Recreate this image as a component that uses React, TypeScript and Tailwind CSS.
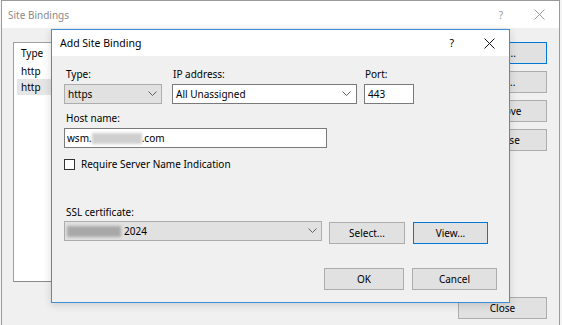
import React from 'react';

const Chevron = () => (
  <svg width="9" height="6" viewBox="0 0 9 6" className="shrink-0">
    <polyline points="0.5,0.5 4.5,4.5 8.5,0.5" fill="none" stroke="#606060" strokeWidth="1" />
  </svg>
);

const CloseX = ({ color }: { color: string }) => (
  <svg width="11" height="11" viewBox="0 0 11 11">
    <path d="M0.5 0.5 L10.5 10.5 M10.5 0.5 L0.5 10.5" stroke={color} strokeWidth="1" />
  </svg>
);

const Button = ({ label, focused = false, className = '' }: { label: string; focused?: boolean; className?: string }) => (
  <div
    className={`h-[22px] flex items-center justify-center bg-[#e1e1e1] border ${
      focused ? 'border-[#0078d7]' : 'border-[#adadad]'
    } ${className}`}
  >
    {label}
  </div>
);

const App = () => {
  return (
    <div className="w-[562px] h-[325px] bg-[#f4f4f4] relative overflow-hidden text-[10px] leading-[16px] text-black font-['Segoe_UI','Noto_Sans',sans-serif]">
      {/* Site Bindings (background window) */}
      <div className="ml-px w-[559px] h-[345px] border border-[#9a9a9a] bg-[#f0f0f0] flex flex-col">
        <div className="h-[27px] bg-white flex items-center pl-[6px] pr-[14px] text-[#8a8a8a]">
          <span className="flex-1">Site Bindings</span>
          <span className="mr-[31px] text-[#9a9a9a]">?</span>
          <CloseX color="#9a9a9a" />
        </div>
        <div className="flex pl-[11px] pt-[14px] pr-[11px]">
          <div className="w-[434px] h-[240px] bg-white border border-[#a0a0a0] border-b-[#8a8a8a] pl-[7px] pt-[1px]">
            <div className="h-[17px] flex items-center">Type</div>
            <div className="mt-[2px] h-[16px] flex items-center">http</div>
            <div className="-ml-[4px] pl-[4px] w-[34px] h-[16px] flex items-center bg-[#e5e5e5]">http</div>
          </div>
          <div className="ml-[11px] flex flex-col gap-[7px] w-[89px]">
            <Button label="Add..." focused />
            <Button label="Edit..." />
            <Button label="Remove" />
            <Button label="Browse" />
            <Button label="Close" className="mt-[139px]" />
          </div>
        </div>
      </div>

      {/* Add Site Binding dialog */}
      <div className="absolute left-[51px] top-[29px] w-[459px] h-[274px] border border-[#3c8fd8] bg-[#f0f0f0] shadow-[0_2px_8px_rgba(0,0,0,0.15)] flex flex-col">
        <div className="h-[26px] bg-white flex items-center pl-[8px] pr-[14px] text-[10.5px]">
          <span className="flex-1">Add Site Binding</span>
          <span className="mr-[30px]">?</span>
          <CloseX color="#111" />
        </div>
        <div className="flex-1 flex flex-col pl-[12px] pr-[12px] pt-[10px]">
          {/* Type / IP / Port */}
          <div className="flex">
            <div className="flex flex-col w-[98px]">
              <span className="pl-[2px]">Type:</span>
              <div className="mt-[2px] h-[20px] bg-[#e1e1e1] border border-[#adadad] flex items-center pl-[3px] pr-[4px]">
                <span className="flex-1">https</span>
                <Chevron />
              </div>
            </div>
            <div className="flex flex-col w-[185px] ml-[10px]">
              <span className="pl-[1px]">IP address:</span>
              <div className="mt-[2px] h-[20px] bg-white border border-[#7a7a7a] flex items-center pl-[3px] pr-[5px]">
                <span className="flex-1">All Unassigned</span>
                <Chevron />
              </div>
            </div>
            <div className="flex flex-col w-[50px] ml-[7px]">
              <span className="pl-[1px]">Port:</span>
              <div className="mt-[2px] h-[20px] bg-white border border-[#7a7a7a] flex items-center pl-[3px]">443</div>
            </div>
          </div>

          {/* Host name */}
          <span className="mt-[6px] pl-[2px]">Host name:</span>
          <div className="mt-[2px] w-[263px] h-[20px] bg-white border border-[#7a7a7a] flex items-center pl-[2px]">
            <span>wsm.</span>
            <span className="w-[50px] h-[11px] bg-[#cfcfcf] blur-[1.5px]" />
            <span>.com</span>
          </div>

          <div className="mt-[9px] flex items-center h-[14px]">
            <div className="w-[11px] h-[11px] bg-white border border-[#333]" />
            <span className="ml-[6px]">Require Server Name Indication</span>
          </div>

          {/* SSL certificate */}
          <span className="mt-[33px] pl-[2px]">SSL certificate:</span>
          <div className="mt-[1px] flex items-start">
            <div className="w-[258px] h-[20px] bg-[#e1e1e1] border border-[#adadad] flex items-center pl-[2px] pr-[4px]">
              <span className="w-[54px] h-[11px] bg-[#a8a8a8] blur-[1.5px]" />
              <span className="ml-[3px] flex-1">2024</span>
              <Chevron />
            </div>
            <Button label="Select..." className="ml-[7px] w-[76px] mt-px" />
            <Button label="View..." focused className="ml-[8px] w-[75px] mt-px" />
          </div>

          {/* OK / Cancel */}
          <div className="mt-[24px] flex justify-end">
            <Button label="OK" className="w-[80px]" />
            <Button label="Cancel" className="ml-[8px] w-[85px]" />
          </div>
        </div>
      </div>
    </div>
  );
};

export default App;
